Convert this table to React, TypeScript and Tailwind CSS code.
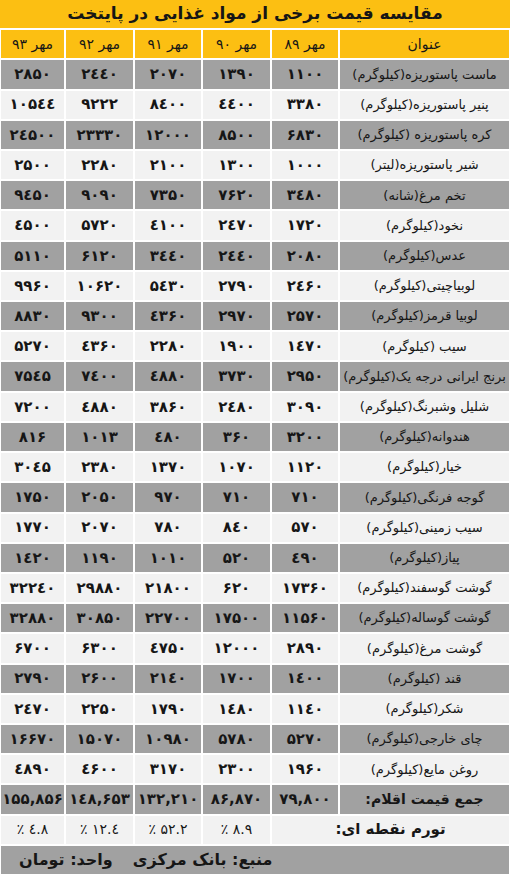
import React from 'react'

/**
 * مقایسه قیمت برخی از مواد غذایی در پایتخت
 */

const toFa = (s: string) => s.replace(/[0-9]/g, (d) => '۰۱۲۳٤۵۶۷۸۹'[Number(d)])

const YEARS = ['89', '90', '91', '92', '93']

const ROWS: [string, string[]][] = [
  ['ماست پاستوریزه(کیلوگرم)', ['1100', '1390', '2070', '2440', '2850']],
  ['پنیر پاستوریزه(کیلوگرم)', ['3380', '4400', '8400', '9222', '10544']],
  ['کره پاستوریزه (کیلوگرم)', ['6830', '8500', '12000', '23330', '24500']],
  ['شیر پاستوریزه(لیتر)', ['1000', '1300', '2100', '2280', '2500']],
  ['تخم مرغ(شانه)', ['3480', '7620', '7350', '9090', '9450']],
  ['نخود(کیلوگرم)', ['1720', '2470', '4100', '5720', '4500']],
  ['عدس(کیلوگرم)', ['2080', '2440', '3440', '6120', '5110']],
  ['لوبیاچیتی(کیلوگرم)', ['2460', '2790', '5430', '10620', '9960']],
  ['لوبیا قرمز(کیلوگرم)', ['2570', '2970', '4360', '9300', '8830']],
  ['سیب (کیلوگرم)', ['1470', '1900', '2280', '4360', '5270']],
  ['برنج ایرانی درجه یک(کیلوگرم)', ['2950', '3730', '4880', '7400', '7545']],
  ['شلیل وشبرنگ(کیلوگرم)', ['3090', '2480', '3860', '4880', '7200']],
  ['هندوانه(کیلوگرم)', ['3200', '360', '480', '1013', '816']],
  ['خیار(کیلوگرم)', ['1120', '1070', '1370', '2380', '3045']],
  ['گوجه فرنگی(کیلوگرم)', ['710', '710', '970', '2050', '1750']],
  ['سیب زمینی(کیلوگرم)', ['570', '840', '780', '2070', '1770']],
  ['پیاز(کیلوگرم)', ['490', '520', '1010', '1190', '1420']],
  ['گوشت گوسفند(کیلوگرم)', ['17360', '620', '21800', '29880', '32240']],
  ['گوشت گوساله(کیلوگرم)', ['11560', '17500', '22700', '30850', '32880']],
  ['گوشت مرغ(کیلوگرم)', ['2890', '12000', '4750', '6300', '6700']],
  ['قند (کیلوگرم)', ['1400', '1700', '2140', '2600', '2790']],
  ['شکر(کیلوگرم)', ['1140', '1480', '1790', '2250', '2470']],
  ['چای خارجی(کیلوگرم)', ['5270', '5780', '10980', '15070', '16670']],
  ['روغن مایع(کیلوگرم)', ['1960', '2300', '3170', '4600', '4890']],
]

const TOTALS = ['79,800', '86,870', '132,210', '148,653', '155,856']
const INFLATION = ['8.9', '52.2', '12.4', '4.8']

const font = "font-['DejaVu_Sans',sans-serif]"

function Cell({ gray, children, className = '' }: { gray: boolean; children?: React.ReactNode; className?: string }) {
  return (
    <div
      className={`flex items-center justify-center text-[#161616] ${gray ? 'bg-[#a1a1a1]' : 'bg-[#f2f2f2]'} ${className}`}
    >
      {children}
    </div>
  )
}

export default function App() {
  return (
    <div
      dir="rtl"
      className={`${font} grid h-[874px] w-[510px] grid-cols-[169px_66px_67px_66px_67px_1fr] grid-rows-[repeat(29,minmax(0,1fr))] gap-[2px] bg-white px-[1px]`}
    >
      <div className="col-span-6 -mx-[1px] flex items-center justify-center bg-[#fcbf12] text-[17px] font-bold text-[#161616]">
        مقایسه قیمت برخی از مواد غذایی در پایتخت
      </div>

      <div className="flex items-center justify-center bg-[#fcbf12] text-[14px] text-[#161616]">عنوان</div>
      {YEARS.map((y) => (
        <div key={y} className="flex items-center justify-center bg-[#fcbf12] text-[14px] text-[#161616]">
          مهر {toFa(y)}
        </div>
      ))}

      {ROWS.map(([name, values], i) => {
        const gray = i % 2 === 0
        return (
          <React.Fragment key={name}>
            <Cell gray={gray} className="text-[13px]">
              {name}
            </Cell>
            {values.map((v, j) => (
              <Cell key={j} gray={gray} className="text-[15px] font-bold">
                <span dir="ltr">{toFa(v)}</span>
              </Cell>
            ))}
          </React.Fragment>
        )
      })}

      <Cell gray className="text-[14px] font-bold">
        جمع قیمت اقلام:
      </Cell>
      {TOTALS.map((v) => (
        <Cell key={v} gray className="text-[15px] font-bold">
          <span dir="ltr">{toFa(v)}</span>
        </Cell>
      ))}

      <Cell gray={false} className="col-span-2 text-[15px] font-bold">
        تورم نقطه ای:
      </Cell>
      {INFLATION.map((v) => (
        <Cell key={v} gray={false} className="text-[14px]">
          <span dir="ltr">٪ {toFa(v)}</span>
        </Cell>
      ))}

      <div className="col-span-6 flex items-center justify-end gap-[20px] bg-[#a1a1a1] pl-[18px] text-[16px] font-bold text-[#161616]">
        <span>منبع: بانک مرکزی</span>
        <span>واحد: تومان</span>
      </div>
    </div>
  )
}
